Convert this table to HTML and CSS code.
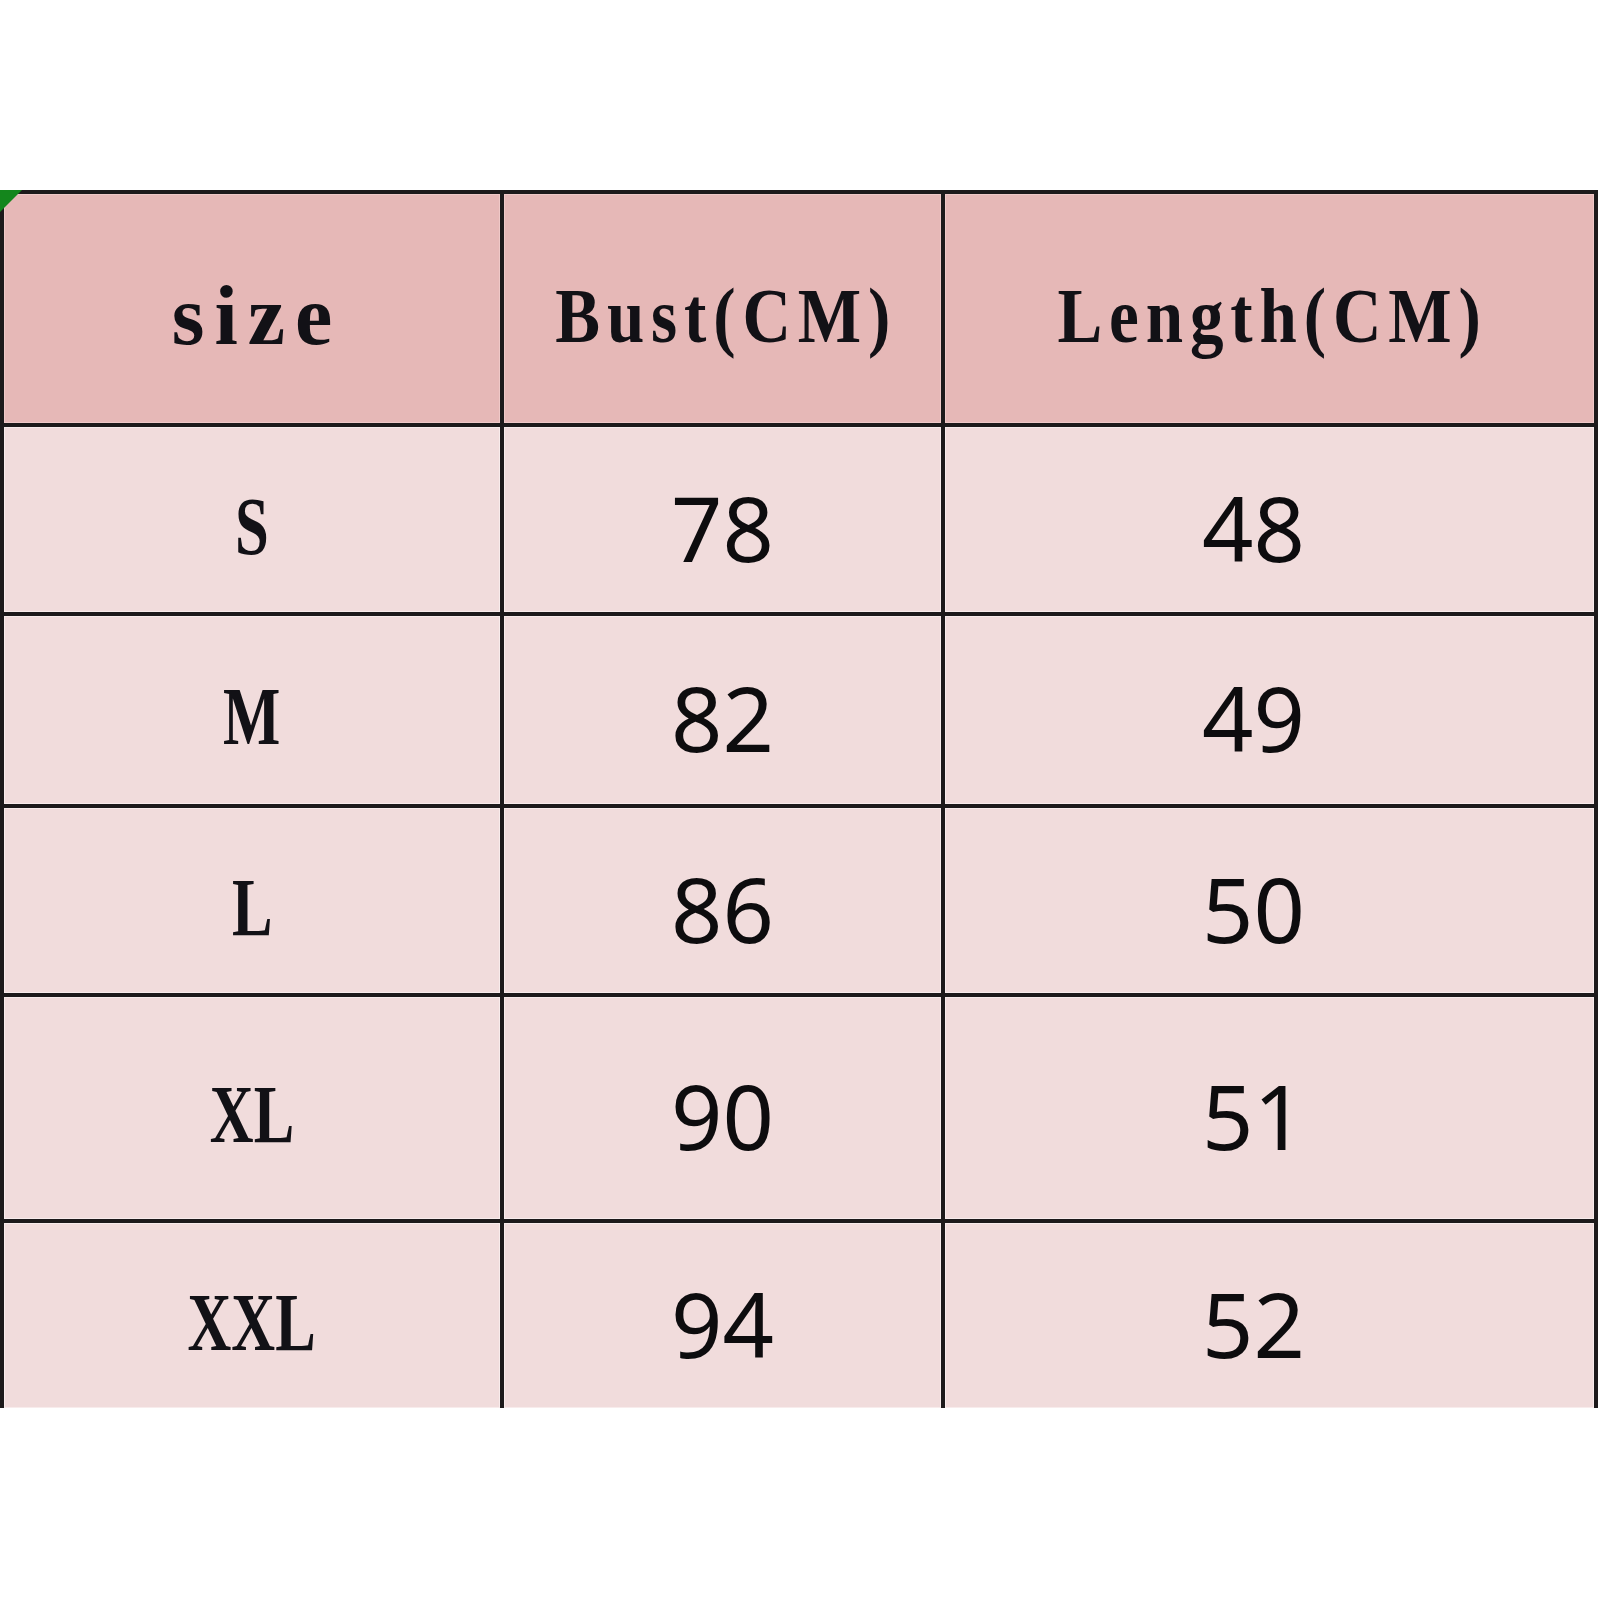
FILE: index.html
```html
<!DOCTYPE html>
<html lang="en">
<head>
<meta charset="utf-8">
<title>Size chart</title>
<link rel="stylesheet" href="styles.css">
</head>
<body>
<div class="page">
  <div class="chart">
    <span class="corner-flag"></span>
    <div class="cell head"><span class="size-word">size</span></div>
    <div class="cell head"><span class="spaced">Bust(CM)</span></div>
    <div class="cell head"><span class="spaced">Length(CM)</span></div>

    <div class="cell label"><span class="narrow">S</span></div>
    <div class="cell num">78</div>
    <div class="cell num len">48</div>

    <div class="cell label"><span class="narrow">M</span></div>
    <div class="cell num">82</div>
    <div class="cell num len">49</div>

    <div class="cell label"><span class="narrow">L</span></div>
    <div class="cell num">86</div>
    <div class="cell num len">50</div>

    <div class="cell label"><span class="narrow">XL</span></div>
    <div class="cell num">90</div>
    <div class="cell num len">51</div>

    <div class="cell label"><span class="narrow">XXL</span></div>
    <div class="cell num">94</div>
    <div class="cell num len">52</div>
  </div>
</div>
</body>
</html>
```

FILE: styles.css
```css
html, body {
  margin: 0;
  padding: 0;
  background: #ffffff;
}

.page {
  padding-top: 190px;
}

.chart {
  position: relative;
  box-sizing: border-box;
  width: 1598px;
  padding: 4px 4px 0 4px;
  background: #1d1a1b;
  display: grid;
  grid-template-columns: 496px 437px 649px;
  grid-template-rows: 229px 185px 188px 185px 222px 185px;
  gap: 4px;
}

.corner-flag {
  position: absolute;
  top: 0;
  left: 0;
  width: 0;
  height: 0;
  border-top: 22px solid #14861c;
  border-right: 22px solid transparent;
}

.cell {
  box-sizing: border-box;
  display: flex;
  align-items: center;
  justify-content: center;
  padding-top: 14px;
  background: #f1dcdc;
  box-shadow: inset 0 0 0 1px #f8ecec;
  color: #121116;
  white-space: nowrap;
}

.head {
  background: #e6b8b7;
  box-shadow: inset 0 0 0 1px #efc9c8;
  font-family: "Liberation Serif", "Times New Roman", serif;
  font-weight: bold;
  font-size: 78px;
}

.size-word {
  font-size: 84px;
  letter-spacing: 10px;
  padding-left: 10px;
}

.spaced {
  display: inline-block;
  letter-spacing: 8px;
  padding-left: 8px;
  transform: scaleX(0.86);
}

.label {
  font-family: "Liberation Serif", "Times New Roman", serif;
  font-weight: bold;
  font-size: 82px;
}

.narrow {
  display: inline-block;
  transform: scaleX(0.74);
}

.num {
  font-family: "Noto Sans", "Open Sans", sans-serif;
  font-weight: 400;
  font-size: 90px;
  color: #0d0c0e;
}

.len {
  padding-right: 32px;
}
```
